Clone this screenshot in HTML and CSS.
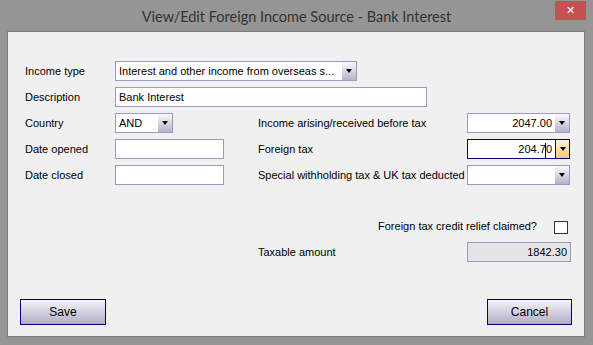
FILE: index.html
```html
<!DOCTYPE html>
<html lang="en">
<head>
    <meta charset="UTF-8">
    <title>View/Edit Foreign Income Source - Bank Interest</title>
    <link rel="stylesheet" href="styles.css">
</head>
<body>
    <div class="window">
        <div class="titlebar">
            <span></span>
            <div class="title">View/Edit Foreign Income Source - Bank Interest</div>
            <button class="close">&#10005;</button>
        </div>

        <div class="content">
            <div class="form">
                <!-- Left side -->
                <label class="label">Income type</label>
                <div class="combo combo-type">
                    <div class="combo-text">Interest and other income from overseas s...</div>
                    <div class="combo-btn"><span class="arrow"></span></div>
                </div>

                <label class="label">Description</label>
                <input class="text text-desc" type="text" value="Bank Interest">

                <label class="label">Country</label>
                <div class="combo combo-country">
                    <div class="combo-text">AND</div>
                    <div class="combo-btn"><span class="arrow"></span></div>
                </div>
                <label class="label">Income arising/received before tax</label>
                <div class="combo combo-num">
                    <div class="combo-text num">2047.00</div>
                    <div class="combo-btn"><span class="arrow"></span></div>
                </div>

                <label class="label">Date opened</label>
                <input class="text text-date" type="text">
                <label class="label">Foreign tax</label>
                <div class="combo combo-num focused">
                    <div class="combo-text num">204.7<span class="caret"></span>0</div>
                    <div class="combo-btn"><span class="arrow"></span></div>
                </div>

                <label class="label">Date closed</label>
                <input class="text text-date" type="text">
                <label class="label">Special withholding tax &amp; UK tax deducted</label>
                <div class="combo combo-num">
                    <div class="combo-text num"></div>
                    <div class="combo-btn"><span class="arrow"></span></div>
                </div>

                <div class="spacer"></div>

                <!-- Relief and totals -->
                <div class="relief">
                    <span class="label">Foreign tax credit relief claimed?</span>
                    <span class="checkbox"></span>
                </div>

                <label class="label taxable-label">Taxable amount</label>
                <input class="text num readonly" type="text" value="1842.30" readonly>
            </div>

            <div class="actions">
                <button class="btn">Save</button>
                <button class="btn">Cancel</button>
            </div>
        </div>
    </div>
</body>
</html>
```

FILE: styles.css
```css
:root {
    --frame: #959595;
    --frame-line: #7c7c7c;
    --panel: #f0f0f0;
    --field-border: #9d99c2;
    --navy: #000080;
    --text: #000;
}

* {
    box-sizing: border-box;
}

body {
    margin: 0;
    font-family: 'Liberation Sans', Arial, sans-serif;
    font-size: 11px;
    color: var(--text);
}

.window {
    width: 593px;
    height: 345px;
    background-color: var(--frame);
    padding: 0 8px 8px 7px;
    display: flex;
    flex-direction: column;
}

.titlebar {
    height: 31px;
    display: grid;
    grid-template-columns: 1fr auto 1fr;
    margin: 0 -1px 0 0;
}

.title {
    font-family: Lato, 'Open Sans', sans-serif;
    font-size: 14.5px;
    color: #333;
    line-height: 33px;
}

.close {
    justify-self: end;
    align-self: start;
    margin-top: 1px;
    width: 31px;
    height: 19px;
    border: none;
    padding: 0;
    background-color: #c75050;
    color: #fff;
    font-family: 'DejaVu Sans', sans-serif;
    font-size: 11px;
    font-weight: bold;
    line-height: 19px;
}

.content {
    flex: 1;
    background-color: var(--panel);
    border: 1px solid var(--frame-line);
    padding: 29px 12px 11px 12px;
}

.form {
    margin-left: 5px;
    display: grid;
    grid-template-columns: 90px 143px 209px 103px;
    grid-template-rows: repeat(5, 20px) 19px 20px 20px;
    row-gap: 6px;
    align-items: center;
}

.label {
    white-space: nowrap;
}

.text {
    height: 20px;
    border: 1px solid var(--field-border);
    background-color: #fff;
    font: inherit;
    padding: 0 3px;
    outline: none;
}

.text-desc {
    grid-column: span 3;
    width: 312px;
}

.text-date {
    width: 109px;
}

.combo {
    height: 20px;
    display: flex;
    border: 1px solid var(--field-border);
    background-color: #fff;
}

.combo-type {
    grid-column: span 3;
    width: 242px;
}

.combo-country {
    width: 58px;
}

.combo-num {
    width: 103px;
}

.combo-text {
    flex: 1;
    padding: 0 3px;
    line-height: 18px;
    white-space: nowrap;
    overflow: hidden;
}

.num {
    text-align: right;
}

.combo-btn {
    width: 14px;
    display: flex;
    align-items: center;
    justify-content: center;
    background: linear-gradient(#fbfbfd, #b5b1cd);
}

.arrow {
    width: 0;
    height: 0;
    border-left: 3.5px solid transparent;
    border-right: 3.5px solid transparent;
    border-top: 4px solid #000;
}

.focused {
    border-color: var(--navy);
}

.focused .combo-btn {
    border-left: 1px solid var(--navy);
    background: linear-gradient(#fff3dc, #ffc779);
}

.caret {
    display: inline-block;
    width: 0;
    height: 15px;
    margin-left: -1px;
    border-left: 1px solid #000;
    vertical-align: middle;
}

.spacer {
    grid-column: 1 / -1;
}

.relief {
    grid-column: 3 / span 2;
    display: flex;
    justify-content: flex-end;
    align-items: center;
    gap: 17px;
}

.checkbox {
    width: 14px;
    height: 13px;
    margin: 2px 2px 0 0;
    border: 1px solid #333;
    background-color: #fff;
}

.taxable-label {
    grid-column: 3;
}

.readonly {
    width: 104px;
    background-color: #e5e5e5;
}

.actions {
    display: flex;
    justify-content: space-between;
    margin-top: 37px;
}

.btn {
    width: 86px;
    height: 26px;
    border: 1px solid var(--navy);
    background: linear-gradient(#f4f4f9, #b0adc8);
    font: inherit;
    font-size: 12px;
    color: #000;
    padding: 0;
}

.btn + .btn {
    width: 85px;
}
```
